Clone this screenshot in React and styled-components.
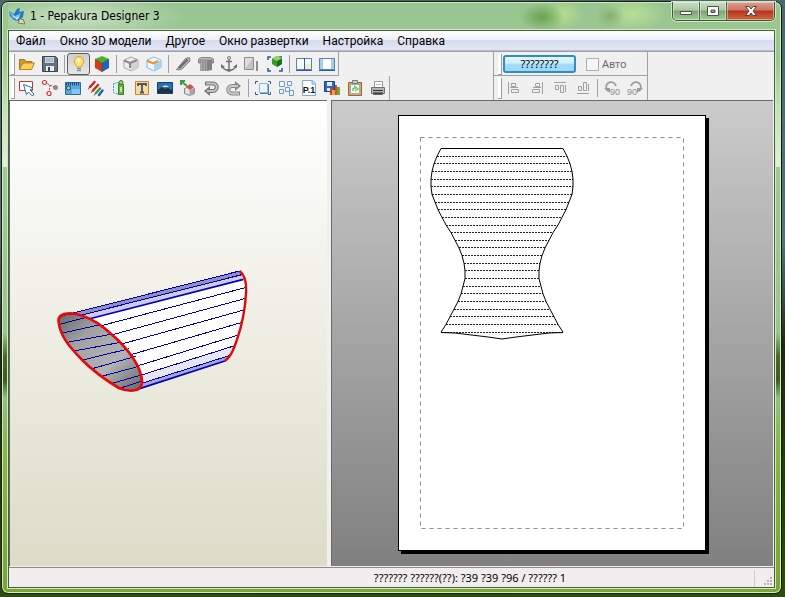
import React from "react"
import styled, { createGlobalStyle } from "styled-components"

const GlobalStyle = createGlobalStyle`
  * {
    box-sizing: border-box;
  }

  body {
    margin: 0;
    font-family: "Noto Sans", "Open Sans", sans-serif;
    font-size: 11px;
    line-height: 16px;
    color: #000;
  }

  button {
    font: inherit;
    color: inherit;
    padding: 0;
    margin: 0;
    border: 0;
    background: none;
  }
`

const Desktop = styled.div`
  display: flex;
  height: 100vh;
  padding: 1px 3px 3px 1px;
  background: linear-gradient(#4d6670, #56727c 40%, #1d2a12 58%, #2f4a14);
`

const Window = styled.div`
  flex: 1;
  min-width: 0;
  display: flex;
  flex-direction: column;
  padding: 0 6px 5px;
  border: 1px solid #16200f;
  border-radius: 7px;
  box-shadow: inset 0 0 0 1px #d5ebc6;
  background: linear-gradient(
    #98c491,
    #9cc992 10%,
    #c2e0bc 18%,
    #e0f2dc 28%,
    #9fc899 28%,
    #9cc491 56%,
    #4a6a28 60%,
    #3f5a22 64%,
    #93c083 67%,
    #8bb84a 74%,
    #7aa534
  );
`

const TitleBar = styled.header`
  height: 28px;
  display: flex;
  justify-content: space-between;
  background: radial-gradient(
      ellipse 22px 14px at 534px 15px,
      #6aa450,
      transparent
    ),
    radial-gradient(ellipse 20px 16px at 556px 12px, #b5dd8e, transparent),
    radial-gradient(ellipse 14px 12px at 602px 14px, #86b070, transparent),
    radial-gradient(ellipse 34px 18px at 625px 12px, #b8df98, transparent),
    radial-gradient(ellipse 110px 22px at 70px 15px, #c9e0c4, transparent);
`

const Title = styled.h1`
  display: flex;
  align-items: center;
  gap: 5px;
  margin: 0 0 0 1px;
  font-family: "DejaVu Sans Condensed", "Noto Sans", sans-serif;
  font-size: 12px;
  font-weight: 400;
`

const Caption = styled.div`
  display: flex;
  height: 19px;
  border: 1px solid #3f5a38;
  border-top: 0;
  border-radius: 0 0 5px 5px;
  overflow: hidden;
  box-shadow: 0 0 0 1px #d0e8c4;
`

const CaptionButton = styled.button`
  width: ${props => (props.$close ? "47px" : "27px")};
  display: flex;
  align-items: center;
  justify-content: center;
  border-right: ${props => (props.$close ? "0" : "1px solid #4c6844")};
  box-shadow: inset 0 0 0 1px rgba(255, 255, 255, 0.4);
  background: ${props =>
    props.$close
      ? "linear-gradient(#dba08f, #cd7460 45%, #b2321a 50%, #d36a42)"
      : "linear-gradient(#c9dfc3, #a9c7a0 45%, #7ea276 50%, #a4cb93)"};
`

const Client = styled.div`
  flex: 1;
  min-height: 0;
  display: flex;
  flex-direction: column;
  border: 1px solid #46603a;
  box-shadow: 0 0 0 1px #d3e8c5;
  background: #f0f0f0;
`

const MenuBar = styled.nav`
  height: 20px;
  flex: none;
  display: flex;
  align-items: center;
  gap: 14px;
  padding-left: 7px;
  border-bottom: 1px solid #b4bccd;
  font-family: Roboto, "Noto Sans", sans-serif;
  font-size: 12px;
  background: linear-gradient(#fff, #eef1f9 45%, #d6dcee 50%, #e2e6f4);
`

const MenuItem = styled.button`
  white-space: nowrap;
`

const ToolbarArea = styled.div`
  flex: none;
  display: grid;
  grid-template-columns: 484px auto;
  justify-content: start;
  border-top: 1px solid #a0a0a0;
`

const Bands = styled.div`
  display: flex;
  flex-direction: column;
  align-items: ${props => (props.$edge ? "stretch" : "flex-start")};
  border-left: ${props => (props.$edge ? "1px solid #a0a0a0" : "0")};
`

const Toolbar = styled.div`
  height: 24px;
  display: flex;
  align-items: center;
  padding-top: ${props => (props.$last ? "0" : "1px")};
  border-right: 1px solid #a0a0a0;
  border-bottom: ${props => (props.$last ? "0" : "1px solid #a0a0a0")};

  &::before {
    content: "";
    width: 3px;
    height: 20px;
    margin-left: ${props => (props.$inset ? "4px" : "2px")};
    border: solid #a0a0a0;
    border-width: 0 1px 1px 0;
    background: #fff;
  }
`

const ToolButton = styled.button`
  width: 23px;
  height: 22px;
  display: flex;
  align-items: center;
  justify-content: center;
  padding-left: 1px;
  border: 1px solid ${props => (props.$pressed ? "#5b5b5b" : "transparent")};
  border-radius: 3px;
  background: ${props =>
    props.$pressed ? "linear-gradient(#cfcfcf, #e6e6e6)" : "none"};
`

const Separator = styled.span`
  width: 6px;
  height: 18px;
  background: linear-gradient(#a0a0a0, #a0a0a0) 3px 0 / 1px 100% no-repeat;
`

const UnfoldButton = styled.button`
  width: 73px;
  height: 18px;
  margin: 0 10px 0 1px;
  border: 2px solid #2f8fc0;
  border-radius: 3px;
  line-height: 14px;
  background: linear-gradient(#e8f7fe, #cdeefd 45%, #a6dcf8 50%, #9ad8f7);
`

const AutoLabel = styled.label`
  display: flex;
  align-items: center;
  gap: 3px;
  width: 61px;
  color: #6d6d6d;
`

const AutoCheck = styled.input`
  appearance: none;
  width: 13px;
  height: 13px;
  margin: 0;
  border: 1px solid #b1b1b1;
  background: #f6f6f6;
`

const Views = styled.main`
  flex: 1;
  min-height: 0;
  display: grid;
  grid-template-columns: 318fr 442fr;
  gap: 4px;
  padding-right: 1px;
`

const View = styled.section`
  min-width: 0;
  min-height: 0;
  display: flex;
  justify-content: center;
  border: solid #696969;
  border-width: 1px 0 0 1px;
  padding: ${props => (props.$paper ? "14px 2px 15px 0" : "0")};
  background: ${props =>
    props.$paper
      ? "linear-gradient(#cbcbcb, #808080)"
      : "linear-gradient(#fff, #dcdcc8)"};
`

const Model = styled.svg`
  width: 100%;
  height: 100%;
`

const Paper = styled.div`
  height: 100%;
  aspect-ratio: 308 / 436;
  border: 1px solid #000;
  box-shadow: 3px 3px 0 #000;
  background: #fff;

  svg {
    display: block;
    width: 100%;
    height: 100%;
  }
`

const StatusBar = styled.footer`
  flex: none;
  height: 20px;
  display: flex;
  align-items: center;
  margin-top: 1px;
  padding-top: 1px;
  border-top: 1px solid #8c8c8c;
  background: #f1eded;
`

const StatusText = styled.span`
  flex: 1;
  padding-left: 177px;
  text-align: center;
`

const Grip = styled.span`
  width: 20px;
  height: 17px;
  display: flex;
  align-items: flex-end;
  justify-content: flex-end;
  border-left: 1px solid #cfcbcb;
`

const icons = {
  open: (
    <>
      <path d="M1.5 14.5v-10h5l1.5 2h6v3" fill="#d29a2c" stroke="#a87414" />
      <path d="M1.5 14.5L5 8h11.5l-3 6.5z" fill="#ffd257" stroke="#b98320" />
    </>
  ),
  save: (
    <>
      <path d="M1.5 1.5h13l2 2v13h-15z" fill="#66707c" stroke="#3c4550" />
      <path d="M4 2h9v6H4z" fill="#c9d6e2" />
      <path d="M5 4h7M5 6h7" stroke="#8fa2b4" />
      <path d="M5 11h8v5H5z" fill="#e9edf1" />
      <path d="M7 12h2v4H7z" fill="#3c4550" />
    </>
  ),
  bulb: (
    <>
      <path d="M9 1.5A4.8 4.8 0 0 0 6 10l1 2h4l1-2a4.8 4.8 0 0 0-3-8.5z" fill="#ffe27a" stroke="#e0a21b" />
      <path d="M7 4.5c1-1 3-1 3 0l-1 4z" fill="#fffbe5" />
      <path d="M7 13.5h4M7 15.5h4" stroke="#8f8f8f" strokeWidth="1.5" />
    </>
  ),
  cube: (
    <>
      <path d="M9 1l7 3-7 4-7-4z" fill="#4ab52c" />
      <path d="M2 4l7 4v9l-7-4z" fill="#d83a1c" />
      <path d="M16 4L9 8v9l7-4z" fill="#1f64b8" />
      <path d="M2 4l7 4 7-4M9 8v9" fill="none" stroke="#31522a" strokeWidth=".6" />
    </>
  ),
  cubeGray: (
    <>
      <path d="M2 5l7-3 7 3v7.5L9 16l-7-3.5z" fill="#eee" stroke="#a4a4a4" />
      <path d="M9 8.5V16l7-3.5V5z" fill="#d2d2d2" />
      <path d="M2 5.500L8 8v5M8 8l7-3" fill="none" stroke="#8a8a8a" strokeWidth="2" />
    </>
  ),
  cubeBlue: (
    <>
      <path d="M2 5l7-3 7 3v7.5L9 16l-7-3.5z" fill="#eef8fd" stroke="#7dbce2" />
      <path d="M9 8.5V16l7-3.5V5z" fill="#a8d4ef" />
      <path d="M2 5.5l6 3L13 6" fill="none" stroke="#ef922d" strokeWidth="2" />
    </>
  ),
  knife: (
    <>
      <path d="M2.5 14.5l9-11 4-1 .5 3.5-8 8-3 1z" fill="#b1b1b1" stroke="#808080" />
      <path d="M5 13l8.5-8.5" stroke="#686868" strokeWidth="2" />
    </>
  ),
  box: (
    <>
      <path d="M3 5h7v11H3z" fill="#a6a6a6" />
      <path d="M10 5h5v10l-5 1z" fill="#828282" />
      <path d="M1.5 4l3-1.500h9l3 1.500v4H15V5H3v3H1.500z" fill="#b9b9b9" stroke="#868686" />
      <path d="M6 6v10M8.500 6v10" stroke="#8b8b8b" />
    </>
  ),
  anchor: (
    <>
      <path d="M9 4v12M6 6.5h6M2 11c1 3 3 4 7 5 4-1 6-2 7-5" fill="none" stroke="#727272" strokeWidth="1.5" />
      <path d="M1 13V9l4 3zM17 13V9l-4 3zM6 14l3 3 3-3z" fill="#727272" />
      <circle cx="9" cy="3" r="1.5" fill="#eee" stroke="#727272" />
    </>
  ),
  panel: (
    <>
      <path d="M1.5 2.5h9v12h-9z" fill="#ddd" stroke="#8b8b8b" />
      <path d="M2 14l8-11v11z" fill="#c2c2c2" />
      <path d="M13 6h2v10h-2z" fill="#8d8d8d" />
    </>
  ),
  fitCube: (
    <>
      <path d="M2 5V2h3M13 2h3M2 13v3h3M16 13v3h-3" fill="none" stroke="#1f57a8" strokeWidth="1.500" />
      <path d="M11 1l5 2.500V9l-5 3-5-3V3.500z" fill="#3d9a27" />
      <path d="M11 1l5 2.500L11 6 6 3.500z" fill="#8fd464" />
      <path d="M11 6v6l5-3V3.500z" fill="#24701a" />
    </>
  ),
  paneLeft: (
    <>
      <path d="M1.5 3.5h15v11h-15z" fill="#f7fbfe" stroke="#5683b0" />
      <path d="M10 9h6v5h-6z" fill="#f3ecca" />
      <path d="M9.5 3v12M1 15.5h16" stroke="#2d5f96" />
    </>
  ),
  paneRight: (
    <>
      <path d="M1.5 3.5h15v11h-15z" fill="#aecbe6" stroke="#5683b0" />
      <path d="M5 4h8v10H5z" fill="#fafcfe" />
      <path d="M1 15.5h16" stroke="#2d5f96" />
    </>
  ),
  select: (
    <>
      <path d="M1.5 2.5h13v9h-13z" fill="#fff" stroke="#c23329" />
      <path d="M5.5 5.5L15 9l-3 2 4 4-1.500 2-4-4-2 2.500z" fill="#fff" stroke="#2c6cb0" />
    </>
  ),
  nodes: (
    <>
      <path d="M3.5 3.5l11 5M9 6l-1 8" fill="none" stroke="#9c4b45" strokeDasharray="2 1" />
      <g fill="#fff" stroke="#d0302a" strokeWidth="1.2">
        <circle cx="3.5" cy="3.5" r="2" />
        <circle cx="8" cy="14.5" r="2" />
      </g>
      <circle cx="14.5" cy="8.5" r="2.5" fill="#8b8b8b" />
    </>
  ),
  measure: (
    <>
      <path d="M1.5 3.5h15v12h-15z" fill="#5aa7dd" stroke="#2a6ca5" />
      <path d="M2 5h14" stroke="#20466d" strokeWidth="3" strokeDasharray="1 1" />
      <circle cx="4.5" cy="9" r="2" fill="#a8cfeb" stroke="#17466f" />
      <path d="M8 10h8v5H8z" fill="#86c4ec" />
    </>
  ),
  pencils: (
    <g strokeWidth="2.5" strokeLinecap="round">
      <path d="M3 8l4.5-5" stroke="#c42b22" />
      <path d="M6 11.5L11 6" stroke="#c42b22" />
      <path d="M9 14l4-4.5" stroke="#3d9b41" />
      <path d="M12 16l3.5-4.5" stroke="#2360ad" />
      <path d="M2 9l-.5 1M5 12.5l-.5 1M8 15l-.5 1" stroke="#684d35" strokeWidth="1" />
    </g>
  ),
  flaps: (
    <>
      <path d="M3.5 4.5l5-1v12l-5-2z" fill="#d9f1f6" stroke="#4d9ba8" strokeDasharray="2 1" />
      <path d="M8.5 5.5h5v10h-5z" fill="#68ae43" stroke="#3a7d26" />
      <circle cx="11" cy="3.5" r="2" fill="#9dce66" stroke="#3a7d26" />
      <path d="M10 8h2v5h-2z" fill="#bde798" />
    </>
  ),
  text: (
    <>
      <path d="M2.5 2.5h13v13h-13z" fill="#f7d9a4" stroke="#c8803a" />
      <path d="M5 7V5h8v2M9 5v9M7 13.5h4" fill="none" stroke="#4a5560" strokeWidth="1.8" />
    </>
  ),
  image: (
    <>
      <path d="M1.5 3.5h15v11h-15z" fill="#2670b8" stroke="#153f6d" />
      <path d="M2 11l4-3 3 2 3-1 4 2v3H2z" fill="#23313c" />
      <path d="M6 8c2-2 5-2 7 0z" fill="#d8ebf6" />
    </>
  ),
  assemble: (
    <>
      <path d="M5.5 9.5l5-2 5 2v5l-5 2-5-2z" fill="#e4e4e4" stroke="#858585" />
      <path d="M10.5 11v5.5l5-2v-5z" fill="#a5a5a5" />
      <path d="M7 8l4-3 4 3-4 3z" fill="#d55248" />
      <path d="M3 3l5 4M2 6V2h4" fill="none" stroke="#36a03a" strokeWidth="2" />
    </>
  ),
  undo: (
    <>
      <path d="M3 4.5h8a3.7 3.7 0 0 1 0 7.5H7" fill="none" stroke="#777" strokeWidth="4" />
      <path d="M8 7l-6 5 6 5z" fill="#777" />
      <path d="M4 4.5h7a3.7 3.7 0 0 1 0 7.5H5" fill="none" stroke="#c4c4c4" strokeWidth="2" />
    </>
  ),
  redo: (
    <>
      <path d="M15 14.5H7A3.7 3.7 0 0 1 7 7h4" fill="none" stroke="#888" strokeWidth="4" />
      <path d="M10 2l6 5-6 5z" fill="#888" />
      <path d="M14 14.5H7A3.7 3.7 0 0 1 7 7h6" fill="none" stroke="#cbcbcb" strokeWidth="2" />
    </>
  ),
  fit: (
    <>
      <path d="M1.5 5V2.5H4M14 2.5h2.500V5M1.5 13v2.500H4M16.500 13v2.500H14" fill="none" stroke="#1e5fa8" />
      <path d="M5.5 4.5h8v9h-8z" fill="#e9f5fc" stroke="#8fb8d8" />
      <path d="M6 14.5h8.500V5" fill="none" stroke="#4b7fa8" />
    </>
  ),
  arrange: (
    <g fill="#eef6fc" stroke="#6f9ac2">
      <path d="M2.5 2.5h5v5h-5zM10.5 2.5h4v4h-4zM2.5 10.5h4v4h-4zM8.5 8.5h4v4h-4zM12.5 11.5h4v5h-4z" />
    </g>
  ),
  page: (
    <>
      <path d="M2.5 1.5h10l3 3v12h-13z" fill="#fff" stroke="#77aeda" />
      <path d="M12 1.5V5h3.5" fill="#cfe6f6" stroke="#77aeda" />
      <text x="9" y="14" textAnchor="middle" fontFamily="Liberation Sans, sans-serif" fontWeight="700" fontSize="9" fill="#111">
        P.1
      </text>
    </>
  ),
  saveAll: (
    <>
      <path d="M1.5 2.5h10v10h-10z" fill="#3268c4" stroke="#1b3f87" />
      <path d="M4 3h5v4H4zM4 9h5v3H4z" fill="#eaf1fb" />
      <path d="M7 9h2v7H7z" fill="#d93b2c" />
      <path d="M9 11h3v5H9z" fill="#eda827" />
      <path d="M12 6h2v10h-2z" fill="#d84935" />
      <path d="M14 8h3v8h-3z" fill="#6aaa3a" />
    </>
  ),
  clipboard: (
    <>
      <path d="M2.5 3.5h13v13h-13z" fill="#e0a45e" stroke="#9e672b" />
      <path d="M4.5 5.5h9v9h-9z" fill="#f5fbf2" stroke="#8ab0cc" />
      <path d="M6.5 1.5h5v3h-5z" fill="#c7cdd2" stroke="#77797b" />
      <path d="M7 12V9.5h2v-2l3 2.500-3 2" fill="none" stroke="#7fc65f" strokeWidth="1.5" />
    </>
  ),
  print: (
    <>
      <path d="M5.5 2.5h8v6h-8z" fill="#fff" stroke="#999" />
      <path d="M2.5 8.5h13v6h-13z" fill="#b6b6b6" stroke="#707070" />
      <path d="M4 11.5h10" stroke="#333" />
      <path d="M4.5 13.5h9v2h-9z" fill="#444" stroke="#666" />
      <path d="M7 5.5h5" stroke="#bbb" />
    </>
  ),
  alignLeft: (
    <path d="M3.5 3v12M6.5 4.5h4v3h-4zM6.5 10.5h7v3h-7zM5 8.5h8" fill="none" stroke="#a0a0a0" />
  ),
  alignRight: (
    <path d="M14.5 3v12M7.5 4.5h4v3h-4zM4.5 10.5h7v3h-7zM5 8.5h8" fill="none" stroke="#a0a0a0" />
  ),
  alignTop: (
    <path d="M3 3.5h12M4.5 6.5h3v4h-3zM9.5 6.5h3v7h-3zM14.5 6v7" fill="none" stroke="#a0a0a0" />
  ),
  alignBottom: (
    <path d="M3 14.5h12M4.5 7.5h3v4h-3zM9.5 3.5h3v8h-3zM14.5 5v7" fill="none" stroke="#a0a0a0" />
  ),
  rotateLeft: (
    <>
      <path d="M5 12A5 5 0 1 1 13 7" fill="none" stroke="#9b9b9b" strokeWidth="1.8" />
      <path d="M1 9h6v5z" fill="#9b9b9b" />
      <text x="12" y="16" textAnchor="middle" fontFamily="Liberation Sans, sans-serif" fontSize="9" fill="#8c8c8c">
        90
      </text>
    </>
  ),
  rotateRight: (
    <>
      <path d="M13 12A5 5 0 1 0 5 7" fill="none" stroke="#9b9b9b" strokeWidth="1.8" />
      <path d="M17 9h-6v5z" fill="#9b9b9b" />
      <text x="6" y="16" textAnchor="middle" fontFamily="Liberation Sans, sans-serif" fontSize="9" fill="#8c8c8c">
        90
      </text>
    </>
  ),
}

const menus = [
  "Файл",
  "Окно 3D модели",
  "Другое",
  "Окно развертки",
  "Настройка",
  "Справка",
]

const mainTools = [
  "open", "save", "|", "bulb", "cube", "|", "cubeGray", "cubeBlue", "|",
  "knife", "box", "anchor", "panel", "fitCube", "|", "paneLeft", "paneRight",
]

const editTools = [
  "select", "nodes", "measure", "pencils", "flaps", "text", "image",
  "assemble", "undo", "redo", "|", "fit", "arrange", "page", "saveAll",
  "clipboard", "print",
]

const alignTools = [
  "alignLeft", "alignRight", "alignTop", "alignBottom", "|", "rotateLeft",
  "rotateRight",
]

const Tools = ({ names }) =>
  names.map((name, i) =>
    name === "|" ? (
      <Separator key={i} />
    ) : (
      <ToolButton
        key={name}
        type="button"
        aria-label={name}
        aria-pressed={name === "bulb" ? true : undefined}
        $pressed={name === "bulb"}
      >
        <svg width="18" height="18" viewBox="0 0 18 18">
          {icons[name]}
        </svg>
      </ToolButton>
    )
  )

const AppLogo = () => (
  <svg width="16" height="18" viewBox="0 0 16 18">
    <path d="M0 4l5 3 3-5 3-1-1 4 5-1-1 6-4 4-5-1-4-4z" fill="#2379bd" />
    <path d="M0 4l6 5 6-3-3 6-5-1z" fill="#7cc4ee" />
    <path d="M3 8l4 3 4-2-3 4z" fill="#d3effc" />
    <path d="M9 16l2-5 2 2 1-1 2 5z" fill="#e0d7ae" stroke="#605a40" strokeWidth=".7" />
  </svg>
)

// lines along the visible side of the tube, front rim to back rim
const sideLines = [
  [95, 175, 597, 48],
  [120, 181, 604, 59],
  [183, 212, 614, 98],
  [213, 240, 616, 130],
  [240, 268, 610, 165],
  [268, 300, 605, 202],
  [290, 333, 597, 239],
  [303, 360, 583, 272],
  [307, 384, 572, 300],
]

const innerLines = [
  [66, 181, 96, 177],
  [57, 208, 130, 189],
  [67, 234, 180, 209],
  [79, 262, 211, 238],
  [101, 288, 240, 262],
  [127, 315, 266, 281],
  [155, 341, 286, 304],
  [187, 363, 295, 334],
  [215, 385, 303, 360],
  [243, 398, 306, 378],
]

const rim =
  "M54 198C53 176 85 168 125 182C163 194 190 216 213 238C255 274 303 330 305 382C302 408 272 414 235 399C200 378 155 345 125 315C89 278 58 244 54 198Z"
const backRim =
  "M597 48C614 60 618 85 617 110C614 160 605 210 590 252C580 282 571 306 553 318"

const ModelDrawing = () => (
  <Model viewBox="-90 -462 948 1395">
    <defs>
      <linearGradient id="inside" x2="1" y2="1">
        <stop offset="0" stopColor="#666" />
        <stop offset=".3" stopColor="#a2a2a2" />
        <stop offset=".65" stopColor="#b3b3b3" />
        <stop offset="1" stopColor="#666" />
      </linearGradient>
    </defs>
    <path
      d="M80 176L597 48C614 60 618 85 617 110C614 160 605 210 590 252C580 282 571 306 553 318L285 405Z"
      fill="#fff"
    />
    <path d="M85 177L597 48l12 25-459 118z" fill="#cfcbea" />
    <path d="M85 177L597 48l7 13-479 120z" fill="#9090c4" />
    <path d="M305 362l278-90-11 28-265 86z" fill="#e6e6f2" />
    <path d="M307 384l265-84-19 18-265 87z" fill="#a7a7d6" />
    <g stroke="#0000a8" strokeWidth="3" shapeRendering="crispEdges">
      {sideLines.map(([x1, y1, x2, y2]) => (
        <line key={y1} x1={x1} y1={y1} x2={x2} y2={y2} />
      ))}
    </g>
    <path d="M145 192L609 73M288 404l265-86" stroke="#0000b8" strokeWidth="5" />
    <path d={rim} fill="url(#inside)" />
    <g stroke="#0000a8" strokeWidth="3" shapeRendering="crispEdges">
      {innerLines.map(([x1, y1, x2, y2]) => (
        <line key={y1} x1={x1} y1={y1} x2={x2} y2={y2} />
      ))}
    </g>
    <path d={rim} fill="none" stroke="#e80808" strokeWidth="8" />
    <path d={backRim} fill="none" stroke="#e00808" strokeWidth="7" />
  </Model>
)

// left edge of the unfolded part at every fold, mirrored round the axis
const axis = 103
const edge = [
  42, 38, 35, 33, 32, 32, 33, 36, 39, 43, 47, 52, 56, 60, 63, 65, 66, 66, 64,
  62, 59, 55, 51, 47, 42,
]
const foldY = i => 32.5 + i * 7.65

const leftPoints = edge.map((x, i) => `${x},${foldY(i)}`).join(" ")
const rightPoints = edge.map((x, i) => `${2 * axis - x},${foldY(i)}`).join(" ")

const NetDrawing = () => (
  <svg viewBox="0 0 306 434">
    <rect x="21.5" y="21.5" width="263" height="391" fill="none" stroke="#8c8c8c" strokeDasharray="4 4" />
    <g stroke="#222" strokeDasharray="2 1" shapeRendering="crispEdges">
      {edge.slice(1).map((x, i) => (
        <line key={i} x1={x} x2={2 * axis - x} y1={foldY(i + 1)} y2={foldY(i + 1)} />
      ))}
    </g>
    <g fill="none" stroke="#000">
      <polyline points={leftPoints} />
      <polyline points={rightPoints} />
      <path d="M42 32.5h122M42 216.5l14 .5 33 4 14 2 14-2 33-4 14-.5" />
    </g>
  </svg>
)

const App = () => {
  return (
    <>
      <GlobalStyle />
      <Desktop>
        <Window>
          <TitleBar>
            <Title>
              <AppLogo />1 - Pepakura Designer 3
            </Title>
            <Caption>
              <CaptionButton type="button" aria-label="Minimize">
                <svg width="14" height="12" viewBox="0 0 14 12">
                  <path d="M1.5 6.5h11v3h-11z" fill="#fff" stroke="#4a5548" />
                </svg>
              </CaptionButton>
              <CaptionButton type="button" aria-label="Maximize">
                <svg width="14" height="12" viewBox="0 0 14 12">
                  <path d="M1.5 1.5h11v9h-11zM5 5v2.500h4V5z" fill="#fff" fillRule="evenodd" stroke="#4a5548" />
                </svg>
              </CaptionButton>
              <CaptionButton type="button" aria-label="Close" $close>
                <svg width="14" height="12" viewBox="0 0 14 12">
                  <path d="M1.5 1.5H5L7 4l2-2.500h3.500L9 6l3.500 4.500H9L7 8l-2 2.500H1.500L5 6z" fill="#fff" stroke="#5b3a38" />
                </svg>
              </CaptionButton>
            </Caption>
          </TitleBar>
          <Client>
            <MenuBar>
              {menus.map(menu => (
                <MenuItem key={menu} type="button">
                  {menu}
                </MenuItem>
              ))}
            </MenuBar>
            <ToolbarArea>
              <Bands>
                <Toolbar>
                  <Tools names={mainTools} />
                </Toolbar>
                <Toolbar $last>
                  <Tools names={editTools} />
                </Toolbar>
              </Bands>
              <Bands $edge>
                <Toolbar $inset>
                  <UnfoldButton type="button">????????</UnfoldButton>
                  <AutoLabel>
                    <AutoCheck type="checkbox" disabled />
                    Авто
                  </AutoLabel>
                </Toolbar>
                <Toolbar $last $inset>
                  <Tools names={alignTools} />
                </Toolbar>
              </Bands>
            </ToolbarArea>
            <Views>
              <View>
                <ModelDrawing />
              </View>
              <View $paper>
                <Paper>
                  <NetDrawing />
                </Paper>
              </View>
            </Views>
            <StatusBar>
              <StatusText>??????? ??????(??): ?39 ?39 ?96 / ?????? 1</StatusText>
              <Grip>
                <svg width="12" height="12" viewBox="0 0 12 12">
                  <path d="M8 2h2v2H8zM8 5h2v2H8zM5 5h2v2H5zM8 8h2v2H8zM5 8h2v2H5zM2 8h2v2H2z" fill="#b8b4b4" />
                </svg>
              </Grip>
            </StatusBar>
          </Client>
        </Window>
      </Desktop>
    </>
  )
}

export default App
